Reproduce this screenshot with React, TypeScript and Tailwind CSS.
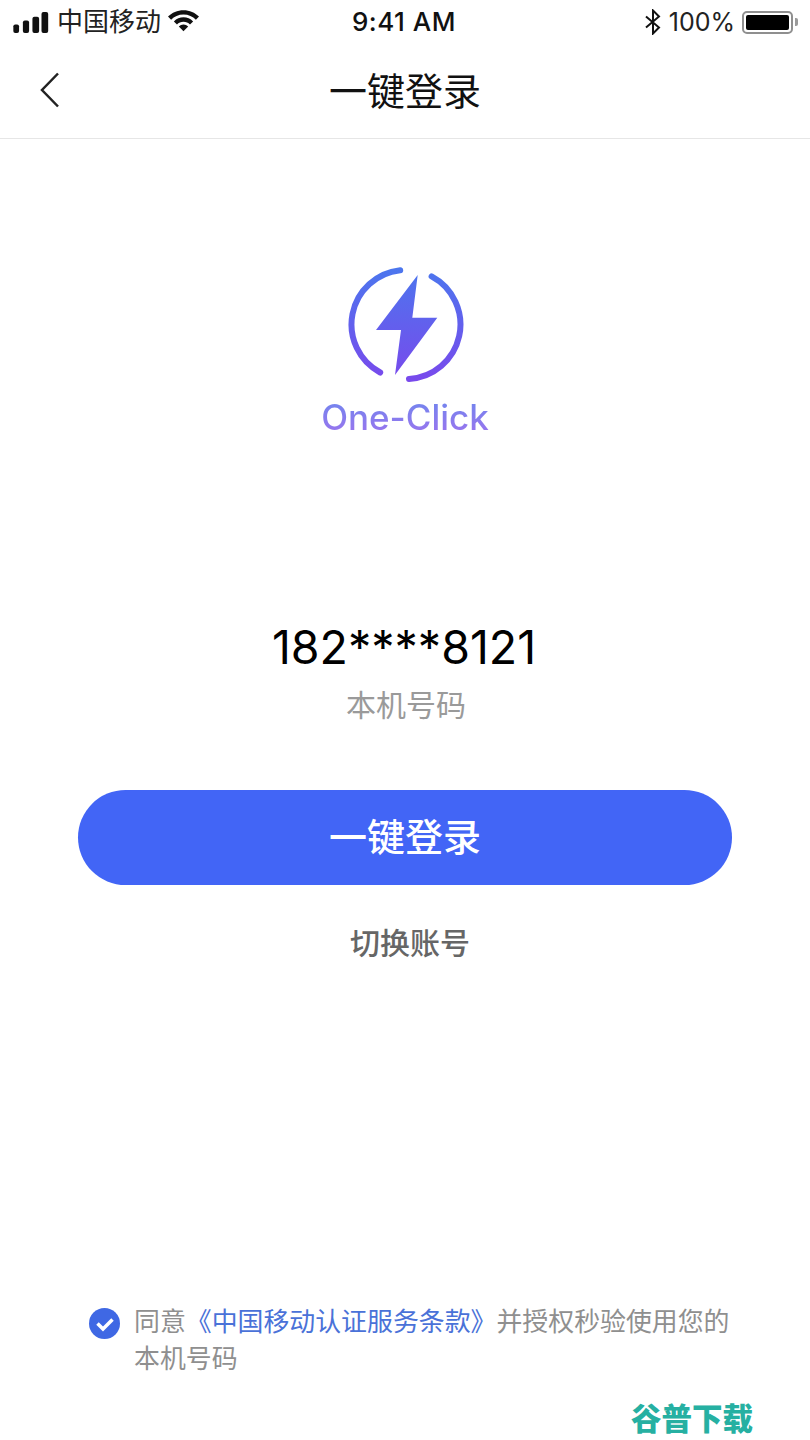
import React from "react";

const FONT = "font-['Inter','Noto_Sans_CJK_SC',sans-serif]";

const StatusBar: React.FC = () => (
  <div className="flex h-[44px] items-center justify-between pl-[13px] pr-[12px] text-[#111]">
    <div className="flex w-[240px] items-center">
      <svg width="36" height="21" viewBox="0 0 37 22" fill="#111">
        <rect x="0" y="13" width="6" height="9" rx="2" />
        <rect x="10" y="9" width="6.500" height="13" rx="2" />
        <rect x="20" y="5" width="7" height="17" rx="2" />
        <rect x="29.500" y="0" width="7" height="22" rx="2" />
      </svg>
      <span className="ml-[8px] text-[26px] leading-none text-[#222]">中国移动</span>
      <svg className="ml-[7px] mt-[-2px]" width="31" height="23" viewBox="0 0 30 22" fill="#111">
        <path d="M15 0C9 0 4 2.300 0 6.200L3 9.200C6 6.200 10.200 4.200 15 4.200C19.800 4.200 24 6.200 27 9.200L30 6.200C26 2.300 21 0 15 0Z" />
        <path d="M15 7C11.500 7 8.300 8.400 5.700 10.900L8.700 13.900C10.300 12.300 12.500 11.300 15 11.300C17.500 11.300 19.700 12.300 21.300 13.900L24.300 10.900C21.700 8.400 18.500 7 15 7Z" />
        <path d="M15 14C13.300 14 11.700 14.700 10.500 15.900L15 20.500L19.500 15.900C18.300 14.700 16.700 14 15 14Z" />
      </svg>
    </div>
    <span className="mr-[3px] text-[26px] font-medium leading-none tracking-[0.5px] text-[#111]">9:41 AM</span>
    <div className="flex w-[240px] items-center justify-end">
      <svg width="18" height="26" viewBox="0 0 18 26" fill="none" stroke="#111" strokeWidth="2">
        <path d="M2 7.500L15 18.500L9 24.500V1.500L15 7.500L2 18.500" />
      </svg>
      <span className="ml-[7px] text-[25px] leading-none text-[#222]">100%</span>
      <div className="ml-[7px] flex items-center">
        <div className="h-[23px] w-[51px] rounded-[5px] border-2 border-[#8f8f8f] p-[2px]">
          <div className="h-full w-full rounded-[2px] bg-black" />
        </div>
        <div className="ml-[2px] h-[8px] w-[3px] rounded-r-[2px] bg-[#9a9a9a]" />
      </div>
    </div>
  </div>
);

const Logo: React.FC = () => (
  <svg width="120" height="120" viewBox="0 0 120 120" fill="none">
    <defs>
      <linearGradient id="logoGrad" gradientUnits="userSpaceOnUse" x1="60" y1="0" x2="60" y2="120">
        <stop offset="0" stopColor="#4a78ee" />
        <stop offset="1" stopColor="#7a48ec" />
      </linearGradient>
    </defs>
    <path
      d="M54.200 6.300A54.500 54.500 0 0 0 34.200 108.500M85.600 12.400A54.500 54.500 0 0 1 63 114.900"
      stroke="url(#logoGrad)"
      strokeWidth="6"
      strokeLinecap="round"
    />
    <path d="M71.700 11L30 66H55L49 111L91.300 53.700H66.300Z" fill="url(#logoGrad)" />
  </svg>
);

export default function App() {
  return (
    <div className={`${FONT} flex h-[1440px] w-[810px] flex-col bg-white`}>
      <StatusBar />
      <header className="flex h-[95px] items-center justify-between border-b border-[#e6e6e6] pl-[40px] pr-[40px]">
        <svg className="mt-[-2px]" width="20" height="36" viewBox="0 0 20 36" fill="none" stroke="#222" strokeWidth="2.500">
          <path d="M18 1.500L2 18L18 34.500" />
        </svg>
        <h1 className="text-[38px] font-normal leading-none text-[#111]">一键登录</h1>
        <div className="w-[20px]" />
      </header>

      <main className="flex flex-1 flex-col items-center">
        <div className="mt-[125px] ml-[2px]">
          <Logo />
        </div>
        <div className="mt-[13px] bg-linear-to-b from-[#6c86ee] to-[#9c72ee] bg-clip-text text-[35px] font-medium leading-[40px] text-transparent">
          One-Click
        </div>
        <div className="mt-[182px] mr-[2px] text-[46.500px] leading-[56px] text-black">182****8121</div>
        <div className="mt-[12px] ml-[2px] text-[30px] leading-[36px] text-[#9a9a9a]">本机号码</div>
        <button className="mt-[67px] flex h-[95px] w-[654px] items-center justify-center rounded-full bg-[#4265f6] text-[38px] font-medium text-white">
          一键登录
        </button>
        <div className="mt-[40px] ml-[10px] text-[30px] font-medium leading-[36px] text-[#666]">切换账号</div>

        <div className="mt-auto flex w-full items-start pl-[89px] pr-[70px]">
          <div className="mt-[5px] flex h-[31px] w-[31px] shrink-0 items-center justify-center rounded-full bg-[#3f68e4]">
            <svg width="20" height="16" viewBox="0 0 20 16" fill="none" stroke="#fff" strokeWidth="3.500">
              <path d="M2.500 7.500L8 13L17.500 3.500" />
            </svg>
          </div>
          <p className="ml-[14px] text-[25.900px] leading-[37px] text-[#8f8f8f]">
            同意<span className="text-[#4a72d8]">《中国移动认证服务条款》</span>并授权秒验使用您的本机号码
          </p>
        </div>
        <div className="mb-[4px] mt-[25px] flex w-full justify-end pr-[57px] text-[30.500px] font-black leading-[34px] text-[#26b0a2]">
          谷普下载
        </div>
      </main>
    </div>
  );
}
